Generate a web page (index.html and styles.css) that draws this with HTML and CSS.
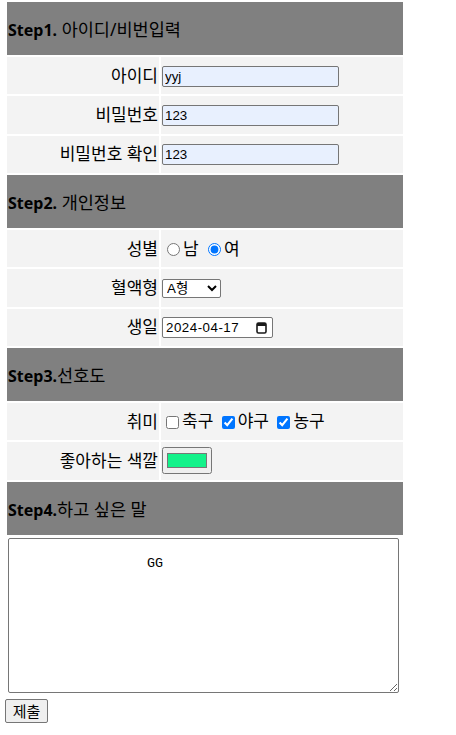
FILE: index.html
```html
<!DOCTYPE html>
<html lang="ko">
<head>
<meta charset="utf-8">
<title>회원가입</title>
<link rel="stylesheet" href="styles.css">
</head>
<body>
<form class="form">
<table class="signup">
  <tr class="step"><th colspan="2"><b>Step1.</b> 아이디/비번입력</th></tr>
  <tr class="row"><td class="label">아이디</td><td class="field"><input type="text" class="text" value="yyj"></td></tr>
  <tr class="row"><td class="label">비밀번호</td><td class="field"><input type="text" class="text" value="123"></td></tr>
  <tr class="row"><td class="label">비밀번호 확인</td><td class="field"><input type="text" class="text" value="123"></td></tr>

  <tr class="step"><th colspan="2"><b>Step2.</b> 개인정보</th></tr>
  <tr class="row"><td class="label">성별</td><td class="field"><input type="radio" name="gender" class="radio">남 <input type="radio" name="gender" class="radio" checked>여</td></tr>
  <tr class="row"><td class="label">혈액형</td><td class="field"><select class="select"><option>A형</option><option>B형</option><option>O형</option><option>AB형</option></select></td></tr>
  <tr class="row"><td class="label">생일</td><td class="field"><span class="date"><input type="text" class="date-text" value="2024-04-17" readonly><svg class="date-icon" width="11" height="13" viewBox="0 0 11 13" aria-hidden="true"><rect x="1" y="2" width="9" height="10" rx="1.5" fill="none" stroke="#1a1a1a" stroke-width="1.6"/><rect x="1" y="2" width="9" height="3" fill="#1a1a1a"/></svg></span></td></tr>

  <tr class="step"><th colspan="2"><b>Step3.</b>선호도</th></tr>
  <tr class="row"><td class="label">취미</td><td class="field"><input type="checkbox" class="check">축구 <input type="checkbox" class="check" checked>야구 <input type="checkbox" class="check" checked>농구</td></tr>
  <tr class="row"><td class="label">좋아하는 색깔</td><td class="field"><input type="color" class="color" value="#13f28a"></td></tr>

  <tr class="step"><th colspan="2"><b>Step4.</b>하고 싶은 말</th></tr>
  <tr class="msg"><td colspan="2" class="msg-cell"><textarea class="area">

                 GG</textarea></td></tr>
</table>
<div class="actions"><input type="submit" class="submit" value="제출"></div>
</form>
</body>
</html>
```

FILE: styles.css
```css
html, body {
  background: #ffffff;
}
body {
  margin: 0 5px;
  font-family: "Noto Sans", "Noto Sans CJK KR", sans-serif;
  font-size: 17px;
  color: #000;
}
.form {
  margin: 0;
}
.signup {
  width: 400px;
  border-spacing: 2px;
  border-collapse: separate;
}
.step th {
  background: #808080;
  height: 53px;
  box-sizing: border-box;
  padding: 1px;
  text-align: left;
  font-weight: normal;
  font-size: 17.5px;
  vertical-align: middle;
}
.step b {
  font-weight: bold;
  font-size: 16px;
}
.row td {
  background: #f3f3f3;
  height: 37.33px;
  box-sizing: border-box;
  padding: 1px;
  vertical-align: middle;
  line-height: 20px;
}
.label {
  width: 152px;
  text-align: right;
}
.field {
  text-align: left;
}
.text {
  box-sizing: border-box;
  width: 177px;
  height: 21px;
  margin: 0;
  padding: 1px 2px;
  border: 1px solid #767676;
  border-radius: 2px;
  background: #e8f0fe;
  font-family: "Liberation Sans", Arial, sans-serif;
  font-size: 13.333px;
  color: #000;
  vertical-align: middle;
}
.radio {
  width: 13px;
  height: 13px;
  margin: 3px 3px 0 5px;
  vertical-align: -1px;
}
.check {
  width: 13px;
  height: 13px;
  margin: 3px 3px 3px 4px;
  vertical-align: -2px;
}
.select {
  box-sizing: border-box;
  width: 59px;
  height: 19px;
  margin: 0;
  font-family: "Liberation Sans", "Noto Sans CJK KR", sans-serif;
  font-size: 13.333px;
  border: 1px solid #767676;
  border-radius: 2px;
  background: #fff;
  vertical-align: middle;
}
.date {
  display: inline-flex;
  align-items: center;
  box-sizing: border-box;
  width: 111px;
  height: 21px;
  padding: 0 5px 0 3px;
  border: 1px solid #767676;
  border-radius: 2px;
  background: #fff;
  vertical-align: middle;
}
.date-text {
  flex: 1;
  min-width: 0;
  margin: 0;
  padding: 0;
  border: 0;
  outline: none;
  background: transparent;
  font-family: "Liberation Sans", Arial, sans-serif;
  font-size: 13.333px;
  letter-spacing: 0.5px;
  color: #000;
}
.date-icon {
  flex: none;
  display: block;
}
.color {
  box-sizing: border-box;
  width: 50px;
  height: 27px;
  margin: 0;
  vertical-align: middle;
}
.msg-cell {
  padding: 1px;
}
.area {
  display: block;
  box-sizing: border-box;
  width: 391px;
  height: 155px;
  margin: 0;
  padding: 2px;
  border: 1px solid #767676;
  border-radius: 2px;
  font-family: "Liberation Mono", monospace;
  font-size: 13.333px;
  line-height: 15px;
  resize: both;
}
.actions {
  padding-top: 3px;
}
.submit {
  box-sizing: border-box;
  width: 43px;
  height: 24px;
  margin: 0;
  padding: 0 4px;
  font-family: "Noto Sans CJK KR", sans-serif;
  font-size: 15px;
  line-height: 20px;
  border: 1px solid #767676;
  border-radius: 2px;
  background: #efefef;
}
```
